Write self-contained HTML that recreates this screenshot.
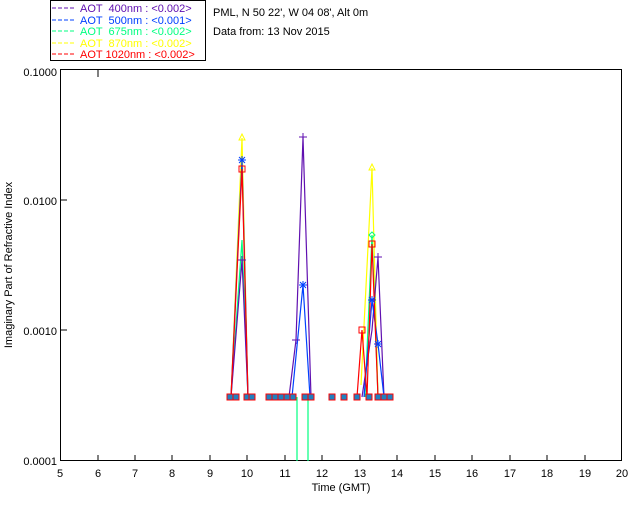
<!DOCTYPE html><html><head><style>body{margin:0;background:#fff;width:640px;height:512px;overflow:hidden}svg{display:block}text{font-family:"Liberation Sans",sans-serif;font-size:11px}</style></head><body>
<svg width="640" height="512" xmlns="http://www.w3.org/2000/svg">
<rect x="50.5" y="0.5" width="155" height="60" fill="#fff" stroke="#000"/>
<g stroke-width="1" stroke-dasharray="4,2">
<line x1="52" y1="8" x2="74" y2="8" stroke="#6010b0"/><line x1="52" y1="20" x2="74" y2="20" stroke="#0040ff"/><line x1="52" y1="31" x2="74" y2="31" stroke="#00ff80"/><line x1="52" y1="43" x2="74" y2="43" stroke="#ffff00"/><line x1="52" y1="54" x2="74" y2="54" stroke="#ff0000"/></g>
<text x="80" y="12" fill="#6010b0" xml:space="preserve">AOT  400nm : &lt;0.002&gt;</text>
<text x="80" y="24" fill="#0040ff" xml:space="preserve">AOT  500nm : &lt;0.001&gt;</text>
<text x="80" y="35" fill="#00ff80" xml:space="preserve">AOT  675nm : &lt;0.002&gt;</text>
<text x="80" y="47" fill="#ffff00" xml:space="preserve">AOT  870nm : &lt;0.002&gt;</text>
<text x="80" y="58" fill="#ff0000" xml:space="preserve">AOT 1020nm : &lt;0.002&gt;</text>
<text x="213" y="16">PML, N 50 22', W 04 08', Alt 0m</text>
<text x="213" y="35">Data from: 13 Nov 2015</text>
<rect x="60.5" y="69.5" width="561" height="391" fill="none" stroke="#000"/>
<g stroke="#000">
<line x1="98" y1="461" x2="98" y2="455"/><line x1="135" y1="461" x2="135" y2="455"/><line x1="172" y1="461" x2="172" y2="455"/><line x1="210" y1="461" x2="210" y2="455"/><line x1="247" y1="461" x2="247" y2="455"/><line x1="285" y1="461" x2="285" y2="455"/><line x1="322" y1="461" x2="322" y2="455"/><line x1="360" y1="461" x2="360" y2="455"/><line x1="397" y1="461" x2="397" y2="455"/><line x1="435" y1="461" x2="435" y2="455"/><line x1="472" y1="461" x2="472" y2="455"/><line x1="510" y1="461" x2="510" y2="455"/><line x1="547" y1="461" x2="547" y2="455"/><line x1="585" y1="461" x2="585" y2="455"/>
<line x1="98" y1="70" x2="98" y2="77"/><line x1="61" y1="200" x2="67" y2="200"/><line x1="61" y1="330" x2="67" y2="330"/>
</g>
<g text-anchor="end"><text x="57" y="76">0.1000</text><text x="57" y="205">0.0100</text><text x="57" y="335">0.0010</text><text x="57" y="465">0.0001</text></g>
<g text-anchor="middle"><text x="60" y="477">5</text><text x="98" y="477">6</text><text x="135" y="477">7</text><text x="172" y="477">8</text><text x="210" y="477">9</text><text x="247" y="477">10</text><text x="285" y="477">11</text><text x="322" y="477">12</text><text x="360" y="477">13</text><text x="397" y="477">14</text><text x="435" y="477">15</text><text x="472" y="477">16</text><text x="510" y="477">17</text><text x="547" y="477">18</text><text x="585" y="477">19</text><text x="622" y="477">20</text>
<text x="341" y="491">Time (GMT)</text>
<text transform="translate(12,265) rotate(-90)" font-size="10">Imaginary Part of Refractive Index</text></g>
<g fill="none" stroke-width="1.2">
<polyline stroke="#ffff00" points="231,397 242,138 248,397"/>
<polyline stroke="#ffff00" points="361,385 372,168 378,397"/>
<polyline stroke="#00ff80" points="231,397 242,240 248,397"/>
<polyline stroke="#00ff80" points="297,397 297,461"/><polyline stroke="#00ff80" points="308,397 308,461"/>
<polyline stroke="#00ff80" points="365,397 372,235 378,397"/>
<polyline stroke="#6010b0" points="231,397 242,260 248,397"/>
<polyline stroke="#6010b0" points="289,397 296,340 303,137 311,397"/>
<polyline stroke="#6010b0" points="362,397 372,330 378,257 384,397"/>
<polyline stroke="#0040ff" points="231,397 242,160 248,397"/>
<polyline stroke="#0040ff" points="292,397 303,285 310,397"/>
<polyline stroke="#0040ff" points="364,397 372,300 378,344 384,397"/>
<polyline stroke="#ff0000" points="231,397 242,169 248,397"/>
<polyline stroke="#ff0000" points="357,397 362,330 367,397 372,244 378,397"/>
</g>
<g stroke="#ff0000" fill="#2080c0">
<rect x="227" y="394" width="6" height="6"/><rect x="233" y="394" width="6" height="6"/><rect x="244" y="394" width="6" height="6"/><rect x="249" y="394" width="6" height="6"/>
<rect x="266" y="394" width="6" height="6"/><rect x="272" y="394" width="6" height="6"/><rect x="278" y="394" width="6" height="6"/><rect x="284" y="394" width="6" height="6"/><rect x="290" y="394" width="6" height="6"/><rect x="302" y="394" width="6" height="6"/><rect x="308" y="394" width="6" height="6"/>
<rect x="329" y="394" width="6" height="6"/><rect x="341" y="394" width="6" height="6"/><rect x="354" y="394" width="6" height="6"/><rect x="366" y="394" width="6" height="6"/><rect x="375" y="394" width="6" height="6"/><rect x="381" y="394" width="6" height="6"/><rect x="387" y="394" width="6" height="6"/>
</g>
<g fill="none" stroke="#ff0000"><rect x="239" y="166" width="6" height="6"/><rect x="359" y="327" width="6" height="6"/><rect x="369" y="241" width="6" height="6"/></g>
<g stroke="#6010b0"><path d="M303 133v9M299 137h8M242 256v8M238 260h8M296 336v8M292 340h8M378 253v8M374 257h8"/></g>
<g stroke="#0040ff"><path d="M238 160h8M242 156v8M239 157l6 6M245 157l-6 6M299 285h8M303 281v8M300 282l6 6M306 282l-6 6M368 300h8M372 296v8M369 297l6 6M375 297l-6 6M374 344h8M378 340v8M375 341l6 6M381 341l-6 6"/></g>
<g fill="none" stroke="#ffff00"><path d="M242 134l3 6h-6z"/><path d="M372 164l3 6h-6z"/></g>
<path d="M372 232l3 3-3 3-3-3z" fill="none" stroke="#00ff80"/>
</svg></body></html>
